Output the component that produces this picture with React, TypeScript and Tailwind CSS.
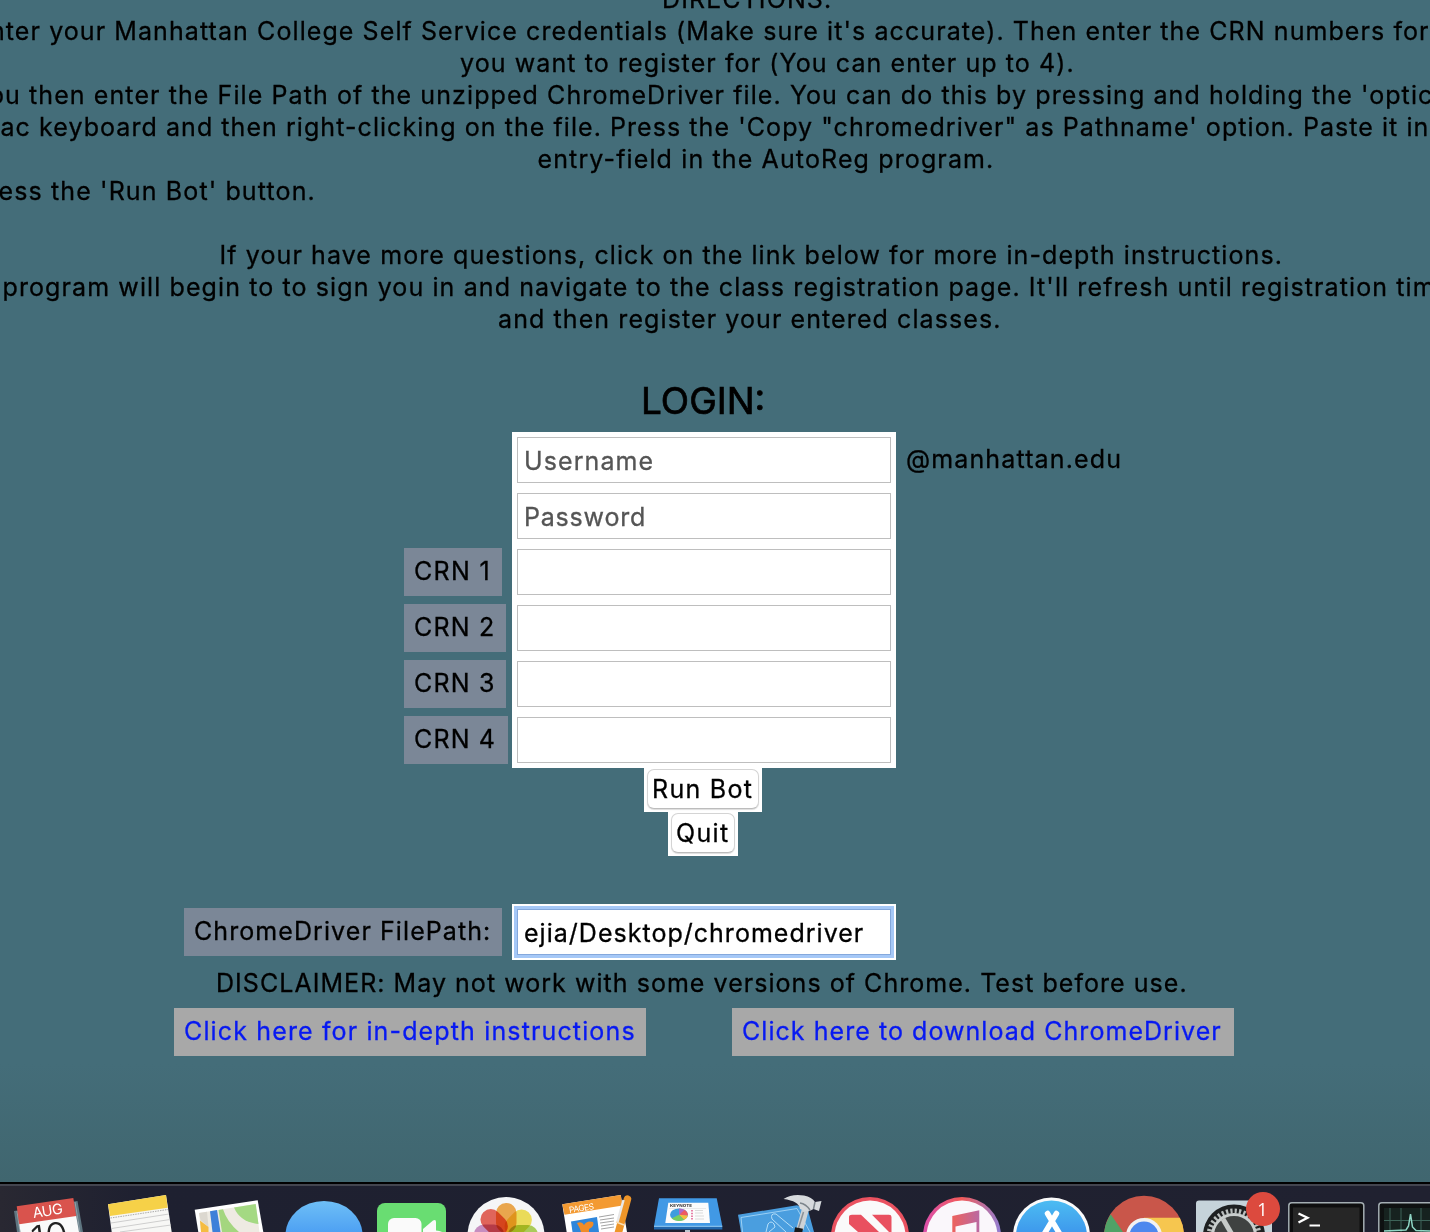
import type { ReactNode } from "react";

const directions = [
  { text: "DIRECTIONS:", cls: "ml-[662px] tracking-[1.1px]" },
  {
    text: "nter your Manhattan College Self Service credentials (Make sure it's accurate). Then enter the CRN numbers for",
    cls: "-ml-[10px] tracking-[1.083px]",
  },
  { text: "you want to register for (You can enter up to 4).", cls: "ml-[460px] tracking-[1.098px]" },
  {
    text: "ou then enter the File Path of the unzipped ChromeDriver file. You can do this by pressing and holding the 'optic",
    cls: "-ml-[11px] tracking-[1.087px]",
  },
  {
    text: "ac keyboard and then right-clicking on the file. Press the 'Copy \"chromedriver\" as Pathname' option. Paste it in",
    cls: "ml-[0.5px] tracking-[1.063px]",
  },
  { text: "entry-field in the AutoReg program.", cls: "ml-[537.5px] tracking-[1.13px]" },
  { text: "ess the 'Run Bot' button.", cls: "-ml-[1.5px] tracking-[1.12px]" },
  { text: " ", cls: "" },
  {
    text: "If your have more questions, click on the link below for more in-depth instructions.",
    cls: "ml-[219.5px] tracking-[1.095px]",
  },
  {
    text: "program will begin to to sign you in and navigate to the class registration page. It'll refresh until registration tim",
    cls: "ml-[2.5px] tracking-[1.105px]",
  },
  { text: "and then register your entered classes.", cls: "ml-[498px] tracking-[1.095px]" },
];

const crnRows = [
  { text: "CRN 1", cls: "w-[98px] tracking-[1.35px]" },
  { text: "CRN 2", cls: "w-[102px] tracking-[1.2px]" },
  { text: "CRN 3", cls: "w-[102px] tracking-[1.2px]" },
  { text: "CRN 4", cls: "w-[104px] tracking-[1.15px]" },
];

function Entry({ children }: { children?: ReactNode }) {
  return (
    <div className="h-14 w-[384px] shrink-0 bg-white p-[5px]">
      <div className="h-[46px] border border-[#bebebe] pl-[6px] pt-[7px] text-[#555]">{children}</div>
    </div>
  );
}

function DockIcon({ x, w, children }: { x: number; w: number; children: ReactNode }) {
  return (
    <svg width={w} height={46} viewBox={`${x} 1186 ${w} 46`} className="shrink-0">
      {children}
    </svg>
  );
}

const petals = ["#f2a33c", "#f3e04a", "#a9cf4b", "#5fc08a", "#5aa9dc", "#8a84d0", "#c987c0", "#e8584c"];

function Dock() {
  return (
    <footer className="h-[50px] shrink-0 border-t-2 border-black bg-[#1e2030] [-webkit-text-stroke:0]">
      <div className="h-[2px] bg-[#43454f]" />
      <div className="flex h-[46px] bg-linear-to-r from-[#292832] via-[#1e2030] via-10% to-[#202130]">
        <DockIcon x={0} w={95}>
          <path d="M14 1211 L77.500 1201 L83 1232 H17Z" fill="#5f7681" />
          <path d="M17 1211 L20 1232 M75 1202 L80 1232" stroke="#8fa2aa" strokeWidth="1" />
          <path d="M19 1223 L76 1215 L79 1232 H20.500Z" fill="#fafafa" />
          <path d="M16.700 1206.300 L73.300 1198 L76.300 1216 L19.200 1224.300Z" fill="#d9534d" />
          <text x="33.500" y="1218" transform="rotate(-8.500 33.500 1218)" fontFamily="Inter" fontSize="14.500" letterSpacing="-0.500" fill="#fff">AUG</text>
          <text x="33" y="1253" transform="rotate(-8.500 33 1253)" fontFamily="Inter" fontSize="37" fontWeight="300" letterSpacing="0" fill="#222">10</text>
        </DockIcon>
        <DockIcon x={95} w={88}>
          <path d="M108 1204.300 L166 1195 L171.700 1232 H111.700Z" fill="#f7f7f5" />
          <path d="M108 1204.300 L166 1195 L167.700 1207.700 L110 1216Z" fill="#f6d148" />
          <path d="M110.500 1218 L168 1209.500" stroke="#aaa" strokeDasharray="1.500 1" fill="none" />
          <path d="M111 1223 L169 1214 M111.500 1228.500 L170 1219.500 M120 1232 L171 1225" stroke="#c8c8c8" strokeWidth="0.900" />
        </DockIcon>
        <DockIcon x={183} w={87}>
          <path d="M194.700 1209.700 L257.700 1200.300 L263.300 1232 H198.300Z" fill="#fff" />
          <path d="M199 1213 L255.700 1204 L259.500 1232 H201Z" fill="#eeeae2" />
          <path d="M199 1213 L207 1211.700 L208.500 1227 L200.500 1220Z" fill="#dcd8d0" />
          <path d="M200 1220.500 L208.500 1227 V1232 H201Z" fill="#f5bc42" />
          <path d="M210 1211.200 L217 1210 L220.500 1232 H212.500Z" fill="#3d80d9" />
          <path d="M218.500 1210 L223 1209.300 Q227 1222 239 1232 H222Z" fill="#a4d67f" />
          <path d="M234 1207.500 L255.700 1204 L258.500 1224 Q240 1222 234 1207.500Z" fill="#a4d983" />
        </DockIcon>
        <DockIcon x={270} w={100}>
          <defs>
            <linearGradient id="msg" x1="0" x2="0" y1="0" y2="1">
              <stop offset="0" stopColor="#6ebff6" />
              <stop offset="0.500" stopColor="#4b9ef3" />
            </linearGradient>
          </defs>
          <ellipse cx="324" cy="1235" rx="38.500" ry="34" fill="url(#msg)" />
        </DockIcon>
        <DockIcon x={370} w={87}>
          <rect x="377" y="1203" width="69" height="60" rx="8" fill="#69dd72" />
          <rect x="388" y="1218" width="33.500" height="30" rx="6" fill="#fafafa" />
          <path d="M423 1229 L433 1220.500 Q436 1219 436 1222 V1240 H423Z" fill="#fafafa" />
          <ellipse cx="436" cy="1236" rx="9" ry="5.500" fill="#fafafa" />
        </DockIcon>
        <DockIcon x={457} w={96}>
          <circle cx="506" cy="1235.500" r="38.500" fill="#f5f6f7" />
          {petals.map((c, i) => (
            <rect key={c} x="496" y="1203" width="20.500" height="30" rx="10" fill={c} opacity="0.9" className="mix-blend-multiply" transform={`rotate(${i * 45} 506 1235)`} />
          ))}
        </DockIcon>
        <DockIcon x={553} w={89}>
          <path d="M562.300 1204.300 L620.700 1195 L627 1232 H566.700Z" fill="#fff" />
          <path d="M562.300 1204.300 L620.700 1195 L622.700 1205.500 L564.500 1214.700Z" fill="#f39a32" />
          <text x="569.500" y="1213" transform="rotate(-8.500 569.500 1213)" fontFamily="Inter" fontSize="8.500" letterSpacing="-0.500" fill="#fff">PAGES</text>
          <path d="M571 1221.500 L597 1217 L599 1232 H572.500Z" fill="#2f86db" />
          <path d="M577 1223 Q582 1221 584 1225 Q587 1220 593 1222 Q595 1226 589 1229 V1232 H581 Q580 1228 577 1223Z" fill="#f08c28" />
          <path d="M599 1217 L614 1214.500 M600 1220 L614 1218 M600 1223 L614 1221 M601 1226 L614 1224 M601 1229 L614 1227" stroke="#999" strokeWidth="0.900" />
          <path d="M627.500 1199 L618 1234" stroke="#ee9528" strokeWidth="7.500" strokeLinecap="round" />
          <path d="M623.500 1200 L617.500 1222" stroke="#e8e8e8" strokeWidth="2.500" />
          <path d="M616 1222 L624 1225" stroke="#f9dfb5" strokeWidth="1.500" />
        </DockIcon>
        <DockIcon x={642} w={88}>
          <path d="M659 1198.300 H716.700 L722.300 1226 H654Z" fill="#4199e5" />
          <path d="M654 1226 H722.300 V1229.500 H654Z" fill="#2368ad" />
          <path d="M654 1226.300 H722.300" stroke="#9bd3f7" />
          <path d="M668.300 1202.700 H708.300 L710 1223 H665.300Z" fill="#fcfcfc" />
          <text x="670" y="1206.500" fontFamily="Inter" fontSize="4" fontWeight="700" letterSpacing="0" textLength="22" lengthAdjust="spacingAndGlyphs" fill="#333">KEYNOTE</text>
          <path d="M669 1208.500 H706" stroke="#ddd" strokeWidth="0.600" />
          <ellipse cx="679" cy="1214.700" rx="9" ry="6.200" fill="#3f9cde" />
          <path d="M679 1214.700 L684 1209.500 Q688 1211.500 688 1215.500Z" fill="#ef5b61" />
          <path d="M679 1214.700 V1208.500 Q683 1208.600 684.500 1210Z" fill="#b069c7" />
          <path d="M679 1214.700 L688 1215.500 Q687 1219 684 1220Z" fill="#f6bd3d" />
          <path d="M679 1214.700 L684.500 1220 Q676 1222.500 671.500 1218.500Z" fill="#76cc5f" />
          <path d="M692 1210 V1220" stroke="#e36d9a" strokeWidth="1.700" strokeDasharray="1.500 1.200" />
          <path d="M695 1210.500 H703 M695 1213 H703 M695 1216 H704 M695 1219 H704" stroke="#ccc" strokeWidth="0.700" />
          <rect x="685" y="1230" width="5" height="2" fill="#bcc6ce" />
        </DockIcon>
        <DockIcon x={730} w={96}>
          <path d="M738 1214.700 L797 1205.300 L808 1210 L814 1232 H741Z" fill="#4a9edf" />
          <path d="M742.500 1232 L741 1217.500 L797 1208.500 L810 1232" stroke="#a5d6f7" strokeWidth="0.900" fill="none" />
          <path d="M772 1219 Q770 1213 776 1214 L793 1228 M772 1219 L786 1232 M766 1232 L768 1224 Q771 1220 774 1224 L775 1227 L769 1232" stroke="#b7dff8" strokeWidth="1" fill="none" />
          <path d="M806 1207 L800 1229" stroke="#cdd2d6" strokeWidth="7" />
          <path d="M803.500 1212 L798.500 1228" stroke="#8b9298" strokeWidth="1.500" />
          <path d="M799 1228 L797.500 1236" stroke="#191919" strokeWidth="8" />
          <path d="M783.500 1199 Q792 1193.500 804 1195.500 Q812 1197 815 1202 L821.500 1201 L819 1211 L813.500 1209 Q808 1213 800 1209 Q799 1201 783.500 1199Z" fill="#d7dadd" />
          <path d="M800 1203 Q806 1204 810 1210 M815 1202 L813.500 1209" stroke="#7d858c" strokeWidth="1.500" fill="none" />
        </DockIcon>
        <DockIcon x={826} w={90}>
          <circle cx="870" cy="1236" r="39" fill="#ea5260" />
          <circle cx="870" cy="1236" r="35.500" fill="#fafafa" />
          <path d="M849 1217 Q849 1214.700 852 1214.700 H861 L879 1232 H858 L849 1224Z" fill="#e9505f" />
          <path d="M872 1214.700 H889 Q891.500 1214.700 891.500 1217 V1232 H889Z" fill="#e9505f" />
        </DockIcon>
        <DockIcon x={916} w={91}>
          <defs>
            <linearGradient id="ring" x1="0" x2="1" y1="0.300" y2="0.400">
              <stop offset="0" stopColor="#db4faf" />
              <stop offset="0.450" stopColor="#f25a58" />
              <stop offset="1" stopColor="#9280d6" />
            </linearGradient>
            <linearGradient id="note" x1="0" x2="1">
              <stop offset="0" stopColor="#ed625d" />
              <stop offset="1" stopColor="#ba69a2" />
            </linearGradient>
          </defs>
          <circle cx="962" cy="1236" r="39" fill="url(#ring)" />
          <circle cx="962" cy="1236" r="35.500" fill="#faf7fb" />
          <path d="M952.300 1216 L979.300 1210.300 V1232 H976.500 V1222 L955.500 1226.500 V1232 H952.300Z" fill="url(#note)" />
        </DockIcon>
        <DockIcon x={1007} w={90}>
          <defs>
            <linearGradient id="store" x1="0" x2="0" y1="0" y2="1">
              <stop offset="0" stopColor="#4cbcf2" />
              <stop offset="0.550" stopColor="#3b91eb" />
            </linearGradient>
          </defs>
          <circle cx="1051.500" cy="1236" r="38.500" fill="#fafafa" />
          <circle cx="1051.500" cy="1236" r="35.500" fill="url(#store)" />
          <path d="M1047.500 1213.500 L1061 1236 M1056.500 1213.500 L1043 1236" stroke="#fff" strokeWidth="5.500" strokeLinecap="round" />
        </DockIcon>
        <DockIcon x={1097} w={93}>
          <circle cx="1144" cy="1235.700" r="40" fill="#c9564a" />
          <path d="M1110.700 1214.300 A40 40 0 0 0 1104 1235 H1125Z" fill="#50a267" />
          <path d="M1144 1217.700 H1179.800 Q1184 1226 1184 1236 H1144Z" fill="#f6c64f" />
          <circle cx="1144" cy="1236" r="18" fill="#f2f2f2" />
          <circle cx="1144" cy="1236" r="14.500" fill="#4d88ee" />
        </DockIcon>
        <DockIcon x={1190} w={94}>
          <rect x="1196" y="1200.500" width="76" height="60" rx="3" fill="#c6d3da" />
          <circle cx="1234" cy="1235.500" r="31" fill="#1e2021" />
          <circle cx="1234" cy="1236" r="25" fill="none" stroke="#b9bebd" strokeWidth="5" strokeDasharray="2.200 2.160" />
          <circle cx="1234" cy="1236" r="21.500" fill="#3f4241" stroke="#c9cecd" strokeWidth="3" />
          <path d="M1223 1219 L1234 1238" stroke="#c6cac8" strokeWidth="5" />
          <circle cx="1263" cy="1209" r="17" fill="#dc4a3e" />
          <text x="1262.500" y="1215.500" textAnchor="middle" fontFamily="Open Sans" fontSize="18" letterSpacing="0" fill="#fff">1</text>
        </DockIcon>
        <DockIcon x={1284} w={87}>
          <rect x="1288.800" y="1202.800" width="75" height="60" rx="3" fill="#0e0e0f" stroke="#a4aeb3" strokeWidth="1.500" />
          <rect x="1293" y="1207.500" width="66.500" height="50" fill="#262626" />
          <path d="M1298.500 1213.500 L1307.500 1217.800 L1298.500 1222.500" fill="none" stroke="#fff" strokeWidth="2.300" />
          <path d="M1309.500 1225.500 H1320" stroke="#fff" strokeWidth="2" />
        </DockIcon>
        <DockIcon x={1371} w={59}>
          <rect x="1378.800" y="1202.800" width="80" height="60" rx="3" fill="#0e1111" stroke="#a4aeb3" strokeWidth="1.500" />
          <rect x="1384" y="1208" width="60" height="30" fill="#16221f" />
          <path d="M1384 1220.500 H1430 M1390 1208 V1232 M1401 1208 V1232 M1421 1208 V1232" stroke="#3d6358" />
          <path d="M1384 1231 L1406 1230 L1408.500 1226 L1410.500 1214 L1412.500 1227 L1416 1230.500 L1430 1231" stroke="#8fd6c4" strokeWidth="1.500" fill="none" />
        </DockIcon>
      </div>
    </footer>
  );
}

export default function App() {
  return (
    <div className="flex h-[1232px] w-[1430px] flex-col overflow-hidden whitespace-pre bg-[#446d79] font-['Inter',sans-serif] text-[25px] leading-8 text-black [-webkit-text-stroke:0.3px]">
      <main className="flex h-[1182px] shrink-0 flex-col overflow-hidden bg-linear-to-b from-[#446d79] from-90% to-[#40666f]">
        <section className="-mt-[17px] h-[352px] shrink-0">
          {directions.map((d, i) => (
            <p key={i} className={`h-8 ${d.cls}`}>{d.text}</p>
          ))}
        </section>

        <h1 className="ml-[641px] mt-[42px] h-[55px] shrink-0 text-[37px] leading-[48px] [-webkit-text-stroke:0.7px]">LOGIN:</h1>

        <section className="flex h-14 shrink-0 pl-[512px]">
          <Entry><span className="tracking-[1.1px]">Username</span></Entry>
          <span className="pl-[10px] pt-[11px] tracking-[1.13px]">@manhattan.edu</span>
        </section>
        <section className="flex h-14 shrink-0 pl-[512px]">
          <Entry><span className="tracking-[0.8px]">Password</span></Entry>
        </section>
        {crnRows.map((r) => (
          <section key={r.text} className="flex h-14 shrink-0 items-center pl-[404px]">
            <div className="w-[108px] shrink-0">
              <div className={`h-12 bg-[#7b8797] pl-[10px] pt-[7px] ${r.cls}`}>{r.text}</div>
            </div>
            <Entry />
          </section>
        ))}

        <div className="ml-[644px] h-11 w-[118px] shrink-0 bg-white px-[3px] pt-px">
          <button className="block h-10 w-[112px] rounded-[7px] border border-[#d4d4d4] border-b-[#bcbcbc] bg-white pb-[3px] pl-[4px] pt-[3px] text-left tracking-[1.3px] shadow-[0_1px_1px_#ddd]">Run Bot</button>
        </div>
        <div className="ml-[668px] h-11 w-[70px] shrink-0 bg-white px-[3px] pt-px">
          <button className="block h-10 w-16 rounded-[7px] border border-[#d4d4d4] border-b-[#bcbcbc] bg-white pb-[3px] pl-[4px] pt-[3px] text-left tracking-[1.35px] shadow-[0_1px_1px_#ddd]">Quit</button>
        </div>

        <section className="mt-12 flex h-14 shrink-0 items-center pl-[184px]">
          <div className="mr-[10px] h-12 w-[318px] bg-[#7b8797] pl-[10px] pt-[7px] tracking-[1.08px]">ChromeDriver FilePath:</div>
          <div className="h-14 w-[384px] bg-white p-[2px]">
            <div className="h-[52px] bg-[#a5c8f7] p-[3px]">
              <div className="h-[46px] border border-[#84a8dc] bg-white pl-[6px] pt-[7px] tracking-[1.02px]">ejia/Desktop/chromedriver</div>
            </div>
          </div>
        </section>

        <p className="ml-[216px] mt-[7px] h-[41px] shrink-0 tracking-[1.04px]">DISCLAIMER: May not work with some versions of Chrome. Test before use.</p>

        <section className="flex h-12 shrink-0 gap-[86px] pl-[174px] text-[#0719f2]">
          <a className="w-[472px] bg-[#a8a8a8] pl-[10px] pt-[7px] tracking-[1.14px]">Click here for in-depth instructions</a>
          <a className="w-[502px] bg-[#a8a8a8] pl-[10px] pt-[7px] tracking-[1.05px]">Click here to download ChromeDriver</a>
        </section>
      </main>
      <Dock />
    </div>
  );
}
